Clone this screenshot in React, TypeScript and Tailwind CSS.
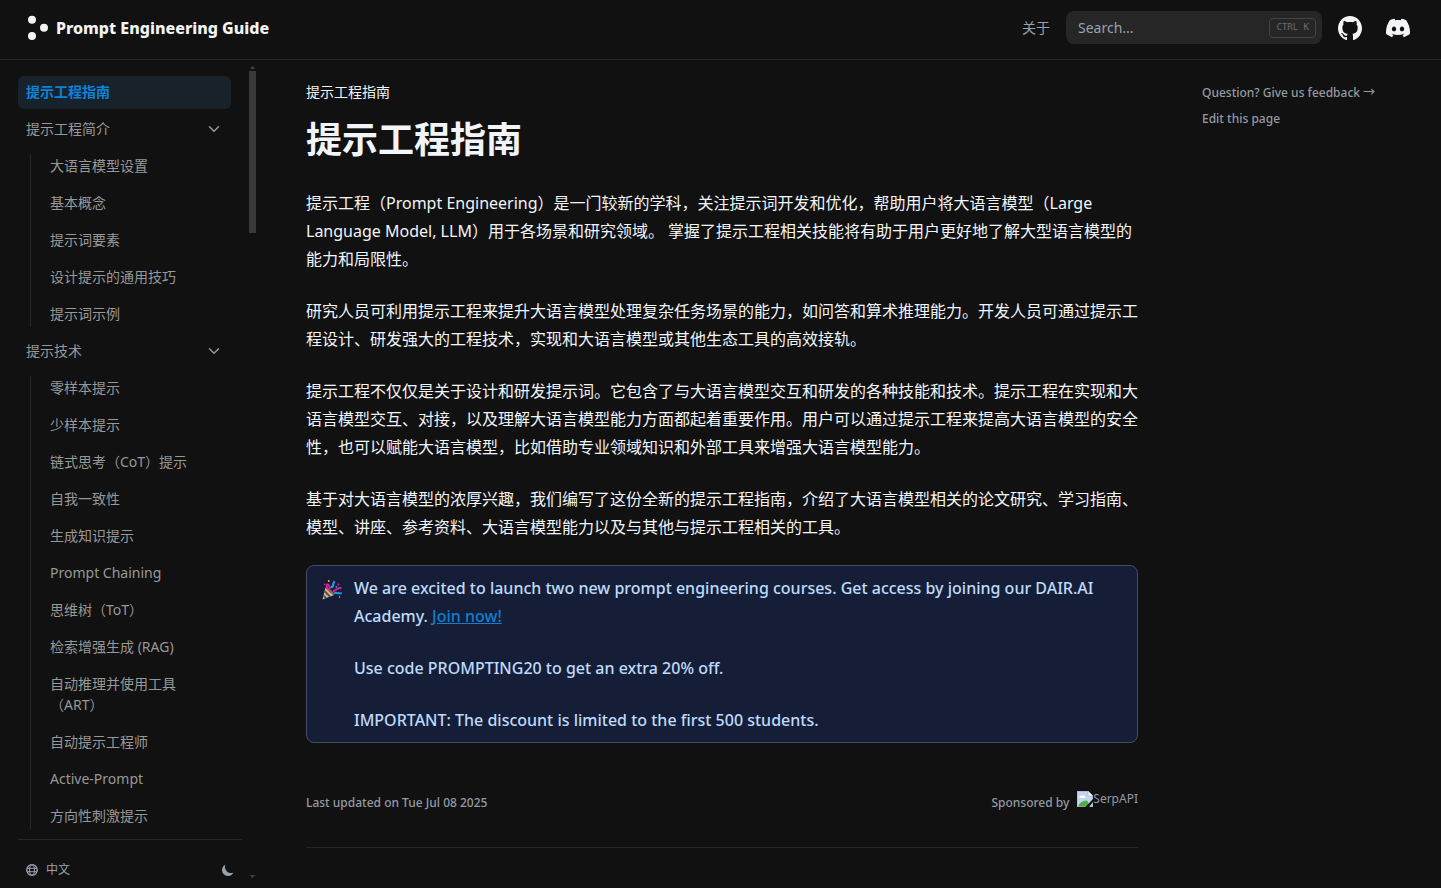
import { ChevronDown } from 'lucide-react';
import { SiDiscord } from 'react-icons/si';

type NavGroup = {
  title: string;
  items: string[];
};

const groups: NavGroup[] = [
  {
    title: '提示工程简介',
    items: ['大语言模型设置', '基本概念', '提示词要素', '设计提示的通用技巧', '提示词示例'],
  },
  {
    title: '提示技术',
    items: [
      '零样本提示',
      '少样本提示',
      '链式思考（CoT）提示',
      '自我一致性',
      '生成知识提示',
      'Prompt Chaining',
      '思维树（ToT）',
      '检索增强生成 (RAG)',
      '自动推理并使用工具（ART）',
      '自动提示工程师',
      'Active-Prompt',
      '方向性刺激提示',
    ],
  },
];

const paragraphs = [
  '提示工程（Prompt Engineering）是一门较新的学科，关注提示词开发和优化，帮助用户将大语言模型（Large Language Model, LLM）用于各场景和研究领域。 掌握了提示工程相关技能将有助于用户更好地了解大型语言模型的能力和局限性。',
  '研究人员可利用提示工程来提升大语言模型处理复杂任务场景的能力，如问答和算术推理能力。开发人员可通过提示工程设计、研发强大的工程技术，实现和大语言模型或其他生态工具的高效接轨。',
  '提示工程不仅仅是关于设计和研发提示词。它包含了与大语言模型交互和研发的各种技能和技术。提示工程在实现和大语言模型交互、对接，以及理解大语言模型能力方面都起着重要作用。用户可以通过提示工程来提高大语言模型的安全性，也可以赋能大语言模型，比如借助专业领域知识和外部工具来增强大语言模型能力。',
  '基于对大语言模型的浓厚兴趣，我们编写了这份全新的提示工程指南，介绍了大语言模型相关的论文研究、学习指南、模型、讲座、参考资料、大语言模型能力以及与其他与提示工程相关的工具。',
];

const Logo = () => (
  <svg width="22" height="26" viewBox="0 0 22 26" fill="currentColor" aria-hidden="true">
    <circle cx="4" cy="4.8" r="4" />
    <circle cx="16" cy="12.7" r="4" />
    <circle cx="4" cy="21" r="4" />
  </svg>
);

const GitHubIcon = () => (
  <svg width="24" height="24" viewBox="3 3 18 18" fill="currentColor" aria-hidden="true">
    <path d="M12 3C7.0275 3 3 7.12937 3 12.2276C3 16.3109 5.57625 19.7597 9.15374 20.9824C9.60374 21.0631 9.77249 20.7863 9.77249 20.5441C9.77249 20.3249 9.76125 19.5982 9.76125 18.8254C7.5 19.2522 6.915 18.2602 6.735 17.7412C6.63375 17.4759 6.19499 16.6569 5.8125 16.4378C5.4975 16.2647 5.0475 15.838 5.80124 15.8264C6.51 15.8149 7.01625 16.4954 7.18499 16.7723C7.99499 18.1679 9.28875 17.7758 9.80625 17.5335C9.885 16.9337 10.1212 16.53 10.38 16.2993C8.3775 16.0687 6.285 15.2728 6.285 11.7432C6.285 10.7397 6.63375 9.9092 7.20749 9.26326C7.1175 9.03257 6.8025 8.08674 7.2975 6.81794C7.2975 6.81794 8.05125 6.57571 9.77249 7.76377C10.4925 7.55615 11.2575 7.45234 12.0225 7.45234C12.7875 7.45234 13.5525 7.55615 14.2725 7.76377C15.9937 6.56418 16.7475 6.81794 16.7475 6.81794C17.2424 8.08674 16.9275 9.03257 16.8375 9.26326C17.4113 9.9092 17.76 10.7281 17.76 11.7432C17.76 15.2843 15.6563 16.0687 13.6537 16.2993C13.98 16.5877 14.2613 17.1414 14.2613 18.0065C14.2613 19.2407 14.25 20.2326 14.25 20.5441C14.25 20.7863 14.4188 21.0746 14.8688 20.9824C16.6554 20.364 18.2079 19.1866 19.3078 17.6162C20.4077 16.0457 20.9995 14.1611 21 12.2276C21 7.12937 16.9725 3 12 3Z" />
  </svg>
);

const PartyIcon = () => (
  <svg width="20" height="20" viewBox="0 0 20 20" fill="none" aria-hidden="true">
    <path d="M3.5 7.5 L12 15 L0.5 19.5 Z" fill="#e0bb88" />
    <path d="M3 10 L9 16.2 L7 17 L2.4 12.4 Z" fill="#4b5168" />
    <path d="M1.8 14.4 L5 17.7 L3 18.5 L1.2 16.7 Z" fill="#4b5168" />
    <path d="M3.8 7.5 C6.5 7.3 12.2 12.6 12 15 C9.5 14.6 4.6 10.2 3.8 7.5 Z" fill="#8d6b4c" />
    <path d="M6 9.4 C4.5 6.4 4 4.6 5.6 4.4 C7.6 4.2 7 7 8.4 8.8" stroke="#e3199b" strokeWidth="2" />
    <path d="M8.6 7 C12.5 8 9.6 4.2 12.6 1.2" stroke="#1b9de2" strokeWidth="2.2" />
    <path d="M11 12 C12.5 9.2 15 9.6 16 8.6 C17 7.6 18 8 19.4 8.2" stroke="#e3199b" strokeWidth="2" />
    <path d="M12 13.4 C14.6 11.6 15.2 14.4 19.6 13" stroke="#1b9de2" strokeWidth="2" />
    <circle cx="6.8" cy="1" r="0.9" fill="#f5b83d" />
    <circle cx="16.4" cy="4.4" r="1" fill="#e3199b" />
    <circle cx="14.4" cy="7" r="0.9" fill="#1b9de2" />
    <circle cx="2.6" cy="4.2" r="0.8" fill="#e3199b" />
    <circle cx="17.6" cy="17" r="0.8" fill="#f5b83d" />
  </svg>
);

const BrokenImageIcon = () => (
  <svg width="16" height="16" viewBox="0 0 16 16" role="img" aria-label="SerpAPI">
    <path d="M0 0 H11 L16 5 V16 H0 Z" fill="#c3d3f3" />
    <path d="M0 0 H11 L16 5 V16 H0 Z" fill="none" stroke="#a5a9b0" />
    <path d="M11 0 L16 5 H11 Z" fill="#f4f6fa" stroke="#a5a9b0" strokeWidth="0.6" />
    <path d="M2.4 6.4 C2.4 4.8 4.2 4.4 4.8 5 C5.4 3.6 8 4 7.8 5.6 C9 5.6 9 7 8 7 H3 Z" fill="#fff" />
    <path d="M1 15.4 C3 11 7 9 10 9.6 L13 15.4 Z" fill="#4caf3f" />
    <path d="M16 8 V11 L12 16 H8.4 Z" fill="#111111" />
  </svg>
);

const Header = () => (
  <header className="flex h-[60px] items-center justify-between border-b border-[#282828] pr-[31px] pb-1 pl-7">
    <a href="#" className="flex items-center gap-1.5 text-gray-100">
      <Logo />
      <span className="font-extrabold">Prompt Engineering Guide</span>
    </a>
    <div className="flex items-center">
      <a href="#about" className="mr-4 text-sm text-gray-400">
        关于
      </a>
      <div className="mr-4 flex h-[33px] w-64 items-center rounded-lg bg-[#262626] pr-1.5 pl-3">
        <input
          type="search"
          aria-label="Search"
          placeholder="Search..."
          className="min-w-0 flex-1 bg-transparent text-sm text-gray-200 outline-none placeholder:text-gray-400"
        />
        <kbd className="flex h-5 items-center rounded border border-[#444444] px-1.5 font-['DejaVu_Sans_Mono',monospace] text-[9px] text-[#666b73]">
          CTRL K
        </kbd>
      </div>
      <div className="flex items-center gap-6 text-gray-100">
        <a href="#github" aria-label="GitHub">
          <GitHubIcon />
        </a>
        <a href="#discord" aria-label="Discord">
          <SiDiscord className="size-6" />
        </a>
      </div>
    </div>
  </header>
);

const Sidebar = () => (
  <aside className="sticky top-0 flex h-[calc(100vh-60px)] w-[258px] shrink-0 justify-between pr-0.5 pl-[18px]">
    <div className="flex w-56 flex-col">
      <nav className="min-h-0 flex-1 overflow-hidden pt-4 pr-[11px] text-sm leading-[21px] text-[#989898]">
        <ul className="flex flex-col gap-1">
          <li>
            <a href="#guide" className="block rounded-md bg-[#18222b] px-2 pt-[5px] pb-[7px] font-semibold text-[#0a84d8]">
              提示工程指南
            </a>
          </li>
          {groups.map((group) => (
            <li key={group.title}>
              <button
                type="button"
                className="flex w-full items-center justify-between px-2 pt-[5px] pb-[7px] text-left"
              >
                {group.title}
                <ChevronDown className="size-[18px]" strokeWidth={2} />
              </button>
              <div className="flex pt-1 pl-3">
                <div className="my-1 w-px bg-[#262626]" />
                <ul className="flex flex-1 flex-col gap-1 pr-2 pl-[11px]">
                  {group.items.map((item) => (
                    <li key={item}>
                      <a href="#page" className="block px-2 pt-[5px] pb-[7px]">
                        {item}
                      </a>
                    </li>
                  ))}
                </ul>
              </div>
            </li>
          ))}
        </ul>
      </nav>
      <div className="flex items-start justify-between border-t border-[#282828] px-2 pt-4 pb-1 text-xs text-gray-400">
        <button type="button" className="flex h-7 items-center gap-2">
          <svg width="12" height="12" viewBox="0 0 12 12" fill="none" stroke="currentColor" aria-hidden="true">
            <circle cx="6" cy="6" r="5.3" strokeWidth="1.3" />
            <ellipse cx="6" cy="6" rx="2.5" ry="5.3" />
            <path d="M1 4.3 H11 M1 7.7 H11" />
          </svg>
          中文
        </button>
        <button type="button" aria-label="Theme" className="flex h-7 items-center">
          <svg width="12" height="12" viewBox="2 2 16 16" fill="currentColor" aria-hidden="true">
            <path d="M17.293 13.293A8 8 0 016.707 2.707a8.001 8.001 0 1010.586 10.586z" />
          </svg>
        </button>
      </div>
    </div>
    <div className="flex w-[7px] flex-col items-center pt-1.5 pb-2.5" aria-hidden="true">
      <svg width="5" height="3" viewBox="0 0 5 3" fill="#444444">
        <path d="M2.5 0 L5 3 H0 Z" />
      </svg>
      <div className="mt-0.5 h-[162px] w-full bg-[#393939]" />
      <svg className="mt-auto" width="5" height="3" viewBox="0 0 5 3" fill="#444444">
        <path d="M0 0 H5 L2.5 3 Z" />
      </svg>
    </div>
  </aside>
);

const Callout = () => (
  <div className="flex rounded-lg border border-[#424d69] bg-[#151e36] py-2 pr-4 font-medium text-blue-200">
    <div className="pt-1.5 pr-3 pl-[15px]">
      <PartyIcon />
    </div>
    <div className="flex flex-1 flex-col gap-6">
      <p>
        We are excited to launch two new prompt engineering courses. Get access by joining our DAIR.AI Academy.{' '}
        <a href="#join" className="text-[#0f7fd0] underline">
          Join now!
        </a>
      </p>
      <p>Use code PROMPTING20 to get an extra 20% off.</p>
      <p>IMPORTANT: The discount is limited to the first 500 students.</p>
    </div>
  </div>
);

const App = () => {
  return (
    <div
      lang="zh-CN"
      className="min-h-screen bg-[#111111] font-['Noto_Sans','Noto_Sans_CJK_SC',sans-serif] text-slate-100"
    >
      <Header />
      <div className="flex items-start">
        <Sidebar />
        <main className="min-w-0 flex-1 px-12 pt-[22px]">
          <div className="text-sm text-gray-100">提示工程指南</div>
          <h1 className="mt-[18px] text-4xl font-bold">提示工程指南</h1>
          <div className="mt-[29px] flex flex-col gap-6 leading-7">
            {paragraphs.map((text) => (
              <p key={text}>{text}</p>
            ))}
            <Callout />
          </div>
          <div className="mt-12 flex items-end justify-between border-b border-[#262626] pb-9 text-xs font-medium text-[#949aa4]">
            <span>Last updated on Tue Jul 08 2025</span>
            <a href="#sponsor" className="flex items-end gap-2">
              Sponsored by
              <span className="flex items-center pb-1 font-normal">
                <BrokenImageIcon />
                SerpAPI
              </span>
            </a>
          </div>
        </main>
        <div className="flex w-[255px] shrink-0 flex-col gap-2.5 px-4 pt-[25px] text-xs font-medium text-[#949aa4]">
          <a href="#feedback">Question? Give us feedback →</a>
          <a href="#edit">Edit this page</a>
        </div>
      </div>
    </div>
  );
};

export default App;
